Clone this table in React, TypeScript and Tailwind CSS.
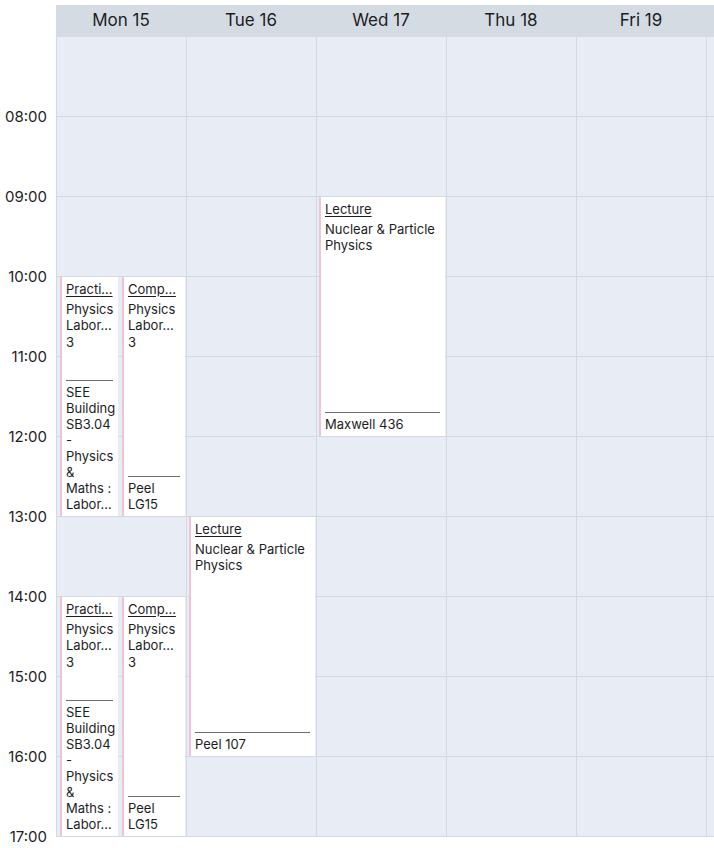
import React from "react";

type Ev = {
  day: number;
  top: number;
  left: number;
  width: number;
  title: string;
  desc: string[];
  loc: string[];
};

const DAYS = ["Mon 15", "Tue 16", "Wed 17", "Thu 18", "Fri 19"];
const HOURS = ["08:00", "09:00", "10:00", "11:00", "12:00", "13:00", "14:00", "15:00", "16:00", "17:00"];

const practicalLoc = ["SEE", "Building", "SB3.04", "-", "Physics", "&", "Maths :", "Labor\u2026"];
const physDesc = ["Physics", "Labor\u2026", "3"];

const EVENTS: Ev[] = [
  { day: 0, top: 240, left: 4, width: 58, title: "Practi\u2026", desc: physDesc, loc: practicalLoc },
  { day: 0, top: 240, left: 66, width: 63, title: "Comp\u2026", desc: physDesc, loc: ["Peel", "LG15"] },
  { day: 0, top: 560, left: 4, width: 58, title: "Practi\u2026", desc: physDesc, loc: practicalLoc },
  { day: 0, top: 560, left: 66, width: 63, title: "Comp\u2026", desc: physDesc, loc: ["Peel", "LG15"] },
  { day: 2, top: 160, left: 3, width: 126, title: "Lecture", desc: ["Nuclear & Particle Physics"], loc: ["Maxwell 436"] },
  { day: 1, top: 480, left: 3, width: 126, title: "Lecture", desc: ["Nuclear & Particle Physics"], loc: ["Peel 107"] },
];

function EventCard({ ev }: { ev: Ev }) {
  return (
    <div
      className="absolute h-[239px] flex flex-col overflow-hidden bg-white border-l-2 border-[#f0c3d7] pl-[4px] pr-[5px] pt-[4px] pb-[4px] text-[13px] leading-[16.5px] text-[#1d1d1f]"
      style={{ top: ev.top, left: ev.left, width: ev.width }}
    >
      <div className="underline underline-offset-[2px] whitespace-nowrap overflow-hidden mb-[3px]">{ev.title}</div>
      <div>
        {ev.desc.map((d, i) => (
          <div key={i}>{d}</div>
        ))}
      </div>
      <div className="flex-1" />
      <div className="border-t border-[#6e6e6e] pt-[3px] leading-[16px]">
        {ev.loc.map((d, i) => (
          <div key={i} className="whitespace-nowrap">{d}</div>
        ))}
      </div>
    </div>
  );
}

export default function App() {
  const rows = Array.from({ length: 10 });
  return (
    <div className="w-[714px] h-[848px] overflow-hidden bg-white pt-[5px] font-['Inter',sans-serif] text-[#1d1d1f]">
      <div className="flex h-[32px]">
        <div className="w-[56px] shrink-0" />
        <div className="flex-1 flex bg-[#d5dbe3]">
          {DAYS.map((d) => (
            <div key={d} className="w-[130px] shrink-0 flex items-center justify-center text-[17px] font-normal">
              {d}
            </div>
          ))}
        </div>
      </div>
      <div className="flex">
        <div className="w-[56px] shrink-0">
          {rows.map((_, i) => (
            <div key={i} className="h-[80px] relative">
              <div className="absolute right-[9px] bottom-0 translate-y-1/2 text-[15px] leading-[18px]">
                {HOURS[i]}
              </div>
            </div>
          ))}
        </div>
        <div className="flex-1 flex bg-[#e8edf5]">
          {[0, 1, 2, 3, 4, 5].map((day) => (
            <div key={day} className={`relative shrink-0 border-l border-[#d3d9e2] ${day === 5 ? "flex-1" : "w-[130px]"}`}>
              {rows.map((_, i) => (
                <div key={i} className="h-[80px] border-b border-[#d3d9e2]" />
              ))}
              {EVENTS.filter((e) => e.day === day).map((e, i) => (
                <EventCard key={i} ev={{ ...e, left: e.left - 1 }} />
              ))}
            </div>
          ))}
        </div>
      </div>
    </div>
  );
}
